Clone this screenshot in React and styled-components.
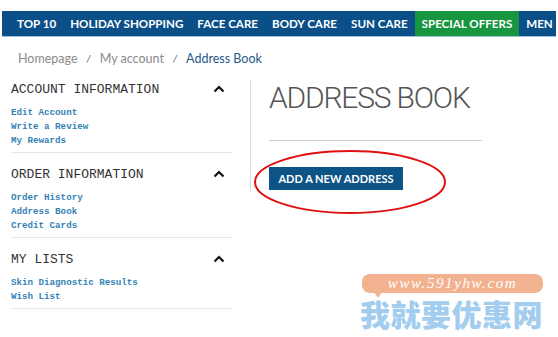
import React from 'react';
import styled, { createGlobalStyle } from 'styled-components';

const GlobalStyle = createGlobalStyle`
  html, body {
    margin: 0;
    padding: 0;
    background: #fff;
  }
  body {
    width: 558px;
    height: 337px;
    overflow: hidden;
    font-family: Lato, "Open Sans", sans-serif;
  }
`;

const Page = styled.div`
  position: relative;
  width: 558px;
  height: 337px;
  padding-top: 11px;
  box-sizing: border-box;
`;

const Nav = styled.nav`
  display: flex;
  align-items: stretch;
  width: 554px;
  height: 26px;
  margin-left: 2px;
  padding-left: 8px;
  box-sizing: border-box;
  background: #0b4f88;
  border-bottom: 1px solid #9cc3e3;
  overflow: hidden;
  white-space: nowrap;
`;

const NavItem = styled.a`
  display: flex;
  align-items: center;
  padding: 0 7px;
  color: #fff;
  background: ${({ $accent }) => ($accent ? '#17953f' : 'transparent')};
  font-family: Lato, sans-serif;
  font-weight: 700;
  font-size: 11.6px;
  text-decoration: none;
`;

const Crumbs = styled.div`
  display: flex;
  align-items: center;
  gap: 9px;
  height: 20px;
  margin: 11px 0 0 18px;
  font-family: Lato, sans-serif;
  font-size: 12.5px;
  color: #8a8a8a;
`;

const Crumb = styled.span`
  color: ${({ $current }) => ($current ? '#1f5a86' : '#8a8a8a')};
`;

const Slash = styled.span`
  font-style: italic;
  font-size: 10px;
  color: #555;
`;

const Body = styled.div`
  display: flex;
  align-items: flex-start;
`;

const Sidebar = styled.aside`
  width: 222px;
  margin-left: 11px;
`;

const Section = styled.section`
  padding: 12px 0 4px;
  border-bottom: 1px solid #e6e6e6;
`;

const SectionHead = styled.div`
  display: flex;
  align-items: center;
  justify-content: space-between;
  height: 18px;
  padding-right: 8px;
  font-family: "Liberation Mono", monospace;
  font-size: 13px;
  color: #333;
`;

const LinkList = styled.ul`
  list-style: none;
  margin: 8px 0 0;
  padding: 0;
`;

const LinkItem = styled.li`
  height: 14px;
  line-height: 14px;
  font-family: "Liberation Mono", monospace;
  font-size: 9.2px;
  font-weight: 700;
  color: #3483b6;
`;

const Main = styled.main`
  margin: 12px 0 0 17px;
  padding-left: 18px;
  height: 113px;
  border-left: 1px solid #dedede;
`;

const Title = styled.h1`
  margin: 0;
  padding-top: 2px;
  font-family: Roboto, sans-serif;
  font-weight: 300;
  font-size: 30px;
  line-height: 32px;
  letter-spacing: -1.2px;
  color: #555;
`;

const Rule = styled.hr`
  width: 213px;
  margin: 26px 0 0;
  border: 0;
  border-top: 1px solid #cfcfcf;
`;

const AddButton = styled.button`
  display: block;
  width: 134px;
  height: 23px;
  margin-top: 26px;
  padding: 0;
  border: 0;
  background: #0d5486;
  color: #fff;
  font-family: Lato, sans-serif;
  font-weight: 700;
  font-size: 11px;
`;

const Annotation = styled.svg`
  position: absolute;
  left: 252px;
  top: 148px;
`;

const Watermark = styled.div`
  position: absolute;
  left: 360px;
  top: 274px;
  width: 186px;
`;

const Bubble = styled.div`
  position: relative;
  margin-left: 2px;
  width: 181px;
  height: 19px;
  border-radius: 8px;
  background: #f3b28f;
  color: #fff;
  text-align: center;
  font-family: "Liberation Serif", serif;
  font-style: italic;
  font-size: 15px;
  line-height: 19px;
  letter-spacing: 1.6px;

  &::after {
    content: '';
    position: absolute;
    left: 12px;
    bottom: -5px;
    border-left: 4px solid transparent;
    border-right: 4px solid transparent;
    border-top: 6px solid #f3b28f;
  }
`;

const BigText = styled.div`
  margin-top: 5px;
  font-family: "Noto Sans CJK SC", sans-serif;
  font-weight: 900;
  font-size: 30px;
  line-height: 30px;
  letter-spacing: 0.5px;
  color: #a3cdee;
`;

const Chevron = () => (
  <svg width="12" height="8" viewBox="0 0 12 8">
    <path d="M1.5 6.5 L6 2 L10.5 6.5" fill="none" stroke="#111" strokeWidth="2.2" />
  </svg>
);

const navItems = ['TOP 10', 'HOLIDAY SHOPPING', 'FACE CARE', 'BODY CARE', 'SUN CARE', 'SPECIAL OFFERS', 'MEN'];

const sections = [
  { title: 'ACCOUNT INFORMATION', links: ['Edit Account', 'Write a Review', 'My Rewards'] },
  { title: 'ORDER INFORMATION', links: ['Order History', 'Address Book', 'Credit Cards'] },
  { title: 'MY LISTS', links: ['Skin Diagnostic Results', 'Wish List'] },
];

export default function App() {
  return (
    <Page>
      <GlobalStyle />
      <Nav>
        {navItems.map((item) => (
          <NavItem key={item} $accent={item === 'SPECIAL OFFERS'}>{item}</NavItem>
        ))}
      </Nav>
      <Crumbs>
        <Crumb>Homepage</Crumb>
        <Slash>/</Slash>
        <Crumb>My account</Crumb>
        <Slash>/</Slash>
        <Crumb $current>Address Book</Crumb>
      </Crumbs>
      <Body>
        <Sidebar>
          {sections.map((s) => (
            <Section key={s.title}>
              <SectionHead>
                <span>{s.title}</span>
                <Chevron />
              </SectionHead>
              <LinkList>
                {s.links.map((l) => (
                  <LinkItem key={l}>{l}</LinkItem>
                ))}
              </LinkList>
            </Section>
          ))}
        </Sidebar>
        <Main>
          <Title>ADDRESS BOOK</Title>
          <Rule />
          <AddButton>ADD A NEW ADDRESS</AddButton>
        </Main>
      </Body>
      <Annotation width="196" height="68" viewBox="0 0 196 68">
        <ellipse cx="98" cy="34" rx="95" ry="31" fill="none" stroke="#e01010" strokeWidth="2" />
      </Annotation>
      <Watermark>
        <Bubble>www.591yhw.com</Bubble>
        <BigText>我就要优惠网</BigText>
      </Watermark>
    </Page>
  );
}
